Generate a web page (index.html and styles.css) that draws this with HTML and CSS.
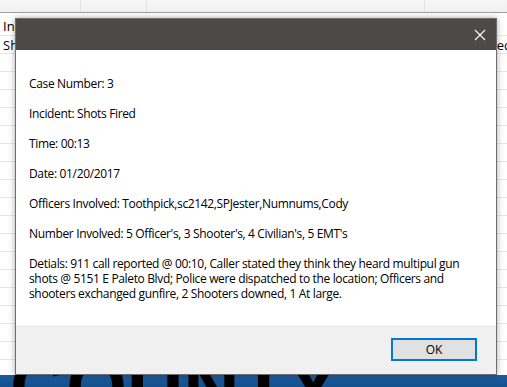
FILE: index.html
```html
<!DOCTYPE html>
<html lang="en">
<head>
    <meta charset="UTF-8">
    <title>Case Details</title>
    <link rel="stylesheet" href="styles.css">
</head>
<body>
    <!-- window behind the dialog -->
    <div class="backdrop">
        <div class="table-head">
            <span class="col c1"></span>
            <span class="col c2"></span>
            <span class="col c3"></span>
            <span class="col c4"></span>
        </div>
        <div class="table-body">
            <div class="row"><span class="cell">Incident</span></div>
            <div class="row"><span class="cell">Shots</span><span class="cell right">Fired</span></div>
            <div class="row"></div><div class="row"></div><div class="row"></div>
            <div class="row"></div><div class="row"></div><div class="row"></div>
            <div class="row"></div><div class="row"></div><div class="row"></div>
            <div class="row"></div><div class="row"></div><div class="row"></div>
            <div class="row"></div><div class="row"></div><div class="row"></div>
            <div class="row"></div><div class="row"></div><div class="row"></div>
        </div>
        <div class="banner"><span class="banner-text">COUNTY</span></div>
    </div>

    <!-- message box -->
    <div class="dialog">
        <div class="titlebar">
            <svg class="close" width="12" height="12" viewBox="0 0 12 12">
                <path d="M1 1 L11 11 M11 1 L1 11" stroke="#fff" stroke-width="1.1" fill="none"/>
            </svg>
        </div>
        <div class="content">
            <p>Case Number: 3</p>
            <p>Incident: Shots Fired</p>
            <p>Time: 00:13</p>
            <p>Date: 01/20/2017</p>
            <p>Officers Involved: Toothpick,sc2142,SPJester,Numnums,Cody</p>
            <p>Number Involved: 5 Officer's, 3 Shooter's, 4 Civilian's, 5 EMT's</p>
            <p>Detials: 911 call reported @ 00:10, Caller stated they think they heard multipul gun<br>shots @ 5151 E Paleto Blvd; Police were dispatched to the location; Officers and<br>shooters exchanged gunfire, 2 Shooters downed, 1 At large.</p>
        </div>
        <div class="footer">
            <button class="ok">OK</button>
        </div>
    </div>
</body>
</html>
```

FILE: styles.css
```css
body, html {
    margin: 0;
    padding: 0;
    width: 100%;
    height: 100%;
    overflow: hidden;
    font-family: "Open Sans", "Noto Sans", Arial, sans-serif;
    font-size: 12px;
    color: #000;
}
.backdrop {
    display: flex;
    flex-direction: column;
    width: 507px;
    height: 387px;
    background: #fff;
    overflow: hidden;
}
.table-head {
    height: 12px;
    flex: none;
    display: flex;
    background: linear-gradient(#f7f7f7, #f0f0f0);
    border-bottom: 1px solid #a0a0a0;
}
.col {
    border-right: 1px solid #e2e2e2;
}
.c1 { width: 80px; }
.c2 { width: 65px; }
.c3 { width: 277px; }
.c4 { flex: 1; border-right: none; }
.table-body {
    flex: 1;
    min-height: 0;
    overflow: hidden;
    padding-top: 4px;
}
.row {
    height: 17px;
    border-bottom: 1px solid #e6e6e6;
    display: flex;
    justify-content: space-between;
    line-height: 18px;
    font-size: 13px;
    white-space: nowrap;
}
.row:first-child {
    height: 18px;
}
.cell {
    padding-left: 3px;
}
.cell.right {
    margin-right: -5px;
}
.banner {
    height: 12px;
    flex: none;
    overflow: hidden;
    background: linear-gradient(#1b5c9e, #14508c);
    position: relative;
}
.banner-text {
    position: absolute;
    left: 10px;
    top: -28px;
    font-family: "Liberation Sans", Arial, sans-serif;
    font-weight: bold;
    font-size: 78px;
    line-height: 1;
    letter-spacing: 0;
    color: #000;
    white-space: nowrap;
}
.dialog {
    position: absolute;
    left: 15px;
    top: 18px;
    width: 480px;
    height: 355px;
    border: 1px solid #6e6e6e;
    display: flex;
    flex-direction: column;
    background: #fff;
    box-shadow: 0 0 6px rgba(0, 0, 0, 0.35);
}
.titlebar {
    height: 31px;
    flex: none;
    background: #4b4a48;
    display: flex;
    align-items: center;
    justify-content: flex-end;
    padding-right: 10px;
}
.close {
    display: block;
}
.content {
    flex: 1;
    min-height: 0;
    overflow: hidden;
    padding: 26px 12px 0 13px;
}
.content p {
    margin: 0 0 15px 0;
    line-height: 15px;
    white-space: nowrap;
    letter-spacing: -0.35px;
}
.footer {
    height: 49px;
    flex: none;
    background: #f0f0f0;
    display: flex;
    justify-content: flex-end;
    align-items: flex-start;
    padding: 13px 19px 0 0;
    box-sizing: border-box;
}
.ok {
    width: 86px;
    height: 23px;
    border: 2px solid #0078d7;
    background: #e1e1e1;
    font-family: "Open Sans", "Noto Sans", Arial, sans-serif;
    font-size: 12px;
    color: #000;
    padding: 0;
}
```
